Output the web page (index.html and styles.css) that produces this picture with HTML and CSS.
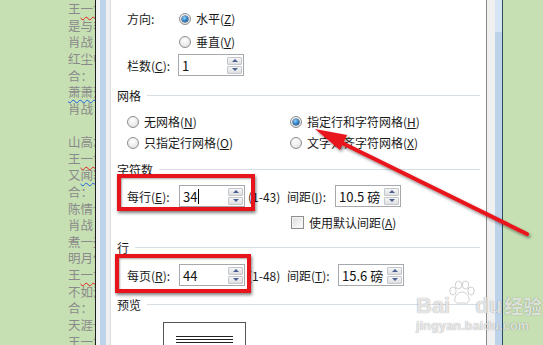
FILE: index.html
```html
<!DOCTYPE html>
<html lang="zh-CN">
<head>
<meta charset="utf-8">
<title>文档网格</title>
<link rel="stylesheet" href="styles.css">
</head>
<body>
<div class="screen">
  <div class="doc-left">
    <div class="ln">王<span class="wv-red">一博</span></div>
    <div class="ln">是与非</div>
    <div class="ln">肖战</div>
    <div class="ln">红尘中</div>
    <div class="ln">合：</div>
    <div class="ln"><span class="wv-blue">萧萧落</span></div>
    <div class="ln">肖战</div>
    <div class="ln">&nbsp;</div>
    <div class="ln">山高水</div>
    <div class="ln">王<span class="wv-red">一博</span></div>
    <div class="ln">又<span class="wv-blue">闻寒</span></div>
    <div class="ln">合：</div>
    <div class="ln">陈情令</div>
    <div class="ln">肖战</div>
    <div class="ln">煮一壶</div>
    <div class="ln">明月何</div>
    <div class="ln">王<span class="wv-red">一博</span></div>
    <div class="ln">不如流</div>
    <div class="ln">合：</div>
    <div class="ln">天涯一</div>
    <div class="ln">王一博</div>
  </div>
  <div class="frame-left">
    <span class="fl-dark"></span><span class="fl-light"></span><span class="fl-blue"></span><span class="fl-gray"></span>
  </div>

  <div class="dialog">
    <div class="row r-dir">
      <span class="label w52">方向:</span>
      <span class="radio on"></span><span class="opt">水平(<u>Z</u>)</span>
    </div>
    <div class="row r-dir indent">
      <span class="radio"></span><span class="opt">垂直(<u>V</u>)</span>
    </div>
    <div class="row r-spin">
      <span class="label w51">栏数(<u>C</u>):</span>
      <span class="spin"><span class="val">1</span><span class="btns"><span class="up"></span><span class="dn"></span></span></span>
    </div>

    <div class="hdr h-grid"><span>网格</span><i></i></div>
    <div class="radios">
      <div class="cell"><span class="radio"></span><span class="opt">无网格(<u>N</u>)</span></div>
      <div class="cell"><span class="radio on"></span><span class="opt">指定行和字符网格(<u>H</u>)</span></div>
      <div class="cell"><span class="radio"></span><span class="opt">只指定行网格(<u>O</u>)</span></div>
      <div class="cell"><span class="radio"></span><span class="opt">文字对齐字符网格(<u>X</u>)</span></div>
    </div>

    <div class="hdr h-chars"><span>字符数</span><i></i></div>
    <div class="row r-num">
      <span class="label w52">每行(<u>E</u>):</span>
      <span class="spin"><span class="val">34<b class="caret"></b></span><span class="btns"><span class="up"></span><span class="dn"></span></span></span>
      <span class="range">(1-43)</span>
      <span class="label w48">间距(<u>I</u>):</span>
      <span class="spin"><span class="val">10.5 磅</span><span class="btns"><span class="up"></span><span class="dn"></span></span></span>
    </div>
    <div class="row r-check">
      <span class="check"></span><span class="opt">使用默认间距(<u>A</u>)</span>
    </div>

    <div class="hdr h-lines"><span>行</span><i></i></div>
    <div class="row r-num r-page">
      <span class="label w52">每页(<u>R</u>):</span>
      <span class="spin"><span class="val">44</span><span class="btns"><span class="up"></span><span class="dn"></span></span></span>
      <span class="range">(1-48)</span>
      <span class="label w51">间距(<u>T</u>):</span>
      <span class="spin"><span class="val">15.6 磅</span><span class="btns"><span class="up"></span><span class="dn"></span></span></span>
    </div>

    <div class="hdr h-prev"><span>预览</span><i></i></div>
    <div class="preview">
      <div class="page"><i></i><i></i><i></i></div>
    </div>
  </div>

  <div class="frame-right">
    <span class="fr-gray"></span><span class="fr-blue"><span class="fr-top"></span></span><span class="fr-dark"></span>
  </div>
  <div class="doc-right"></div>

  <div class="mark mark-a"></div>
  <div class="mark mark-b"></div>

  <svg class="arrow" width="543" height="345" viewBox="0 0 543 345">
    <defs>
      <filter id="sh" x="-20%" y="-20%" width="140%" height="140%">
        <feDropShadow dx="1.5" dy="2" stdDeviation="1.5" flood-color="#000" flood-opacity="0.45"/>
      </filter>
    </defs>
    <g filter="url(#sh)">
      <line x1="527" y1="234" x2="338" y2="141" stroke="#e8141b" stroke-width="4" stroke-linecap="round"/>
      <polygon points="315,129 347,135 340,150" fill="#e8141b"/>
    </g>
  </svg>

  <div class="watermark">
    <div class="wm-top"><span>Bai</span><svg class="paw" width="30" height="26" viewBox="0 0 30 26"><ellipse cx="6" cy="11" rx="3.2" ry="4" /><ellipse cx="11.5" cy="5" rx="3.2" ry="4"/><ellipse cx="18.5" cy="5" rx="3.2" ry="4"/><ellipse cx="24" cy="11" rx="3.2" ry="4"/><path d="M15 12 C10 12 7 18 8 21 C9 24 12 23 15 23 C18 23 21 24 22 21 C23 18 20 12 15 12 Z"/></svg><span>du</span><span class="wm-cn">经验</span></div>
    <div class="wm-url">jingyan.baidu.com</div>
  </div>
</div>
</body>
</html>
```

FILE: styles.css
```css
html, body {
  margin: 0;
  padding: 0;
  background: #fff;
}
.screen {
  position: relative;
  width: 543px;
  height: 345px;
  overflow: hidden;
  display: flex;
  font-family: "Noto Sans CJK SC", "Noto Sans", sans-serif;
  font-size: 12px;
  color: #1a1a1a;
}

/* ---------- left document area ---------- */
.doc-left {
  width: 95px;
  flex: none;
  background: #c6e0b4;
  box-sizing: border-box;
  padding: 1px 0 0 68px;
  overflow: hidden;
  white-space: nowrap;
  color: #8a8a8a;
  font-size: 12.5px;
}
.ln {
  height: 16.625px;
  line-height: 16.625px;
}
.wv-red {
  text-decoration: underline wavy #e02020;
  text-decoration-thickness: 1px;
  text-underline-offset: 2px;
}
.wv-blue {
  text-decoration: underline wavy #2060e0;
  text-decoration-thickness: 1px;
  text-underline-offset: 2px;
}

.frame-left {
  display: flex;
  flex: none;
}
.fl-dark { width: 1px; background: #1e1e1e; }
.fl-light { width: 4px; background: #f3f3f3; }
.fl-blue { width: 6px; background: #bcd3ea; }
.fl-gray { width: 4px; background: #efefef; border-right: 1px solid #dcdcdc; }

/* ---------- dialog ---------- */
.dialog {
  width: 376px;
  flex: none;
  box-sizing: border-box;
  background: #fff;
  border-right: 1px solid #8a8a8a;
  padding: 7px 6px 0 6px;
  display: flex;
  flex-direction: column;
}
.dialog > * {
  flex-shrink: 0;
}
.row {
  display: flex;
  align-items: center;
  padding-left: 10px;
  white-space: nowrap;
}
.r-dir { height: 23px; }
.indent { padding-left: 62px; }
.r-spin { height: 24px; }
.label { flex: none; }
.w52 { width: 52px; }
.w51 { width: 51px; }
.w48 { width: 48px; }
.opt { margin-left: 5px; }
u { text-decoration: underline; text-underline-offset: 1px; }

.radio {
  flex: none;
  width: 12px;
  height: 12px;
  box-sizing: border-box;
  border-radius: 50%;
  border: 1px solid #8c8e90;
  background: radial-gradient(circle at 45% 35%, #ffffff 0, #ececec 55%, #cfd0d1 100%);
  position: relative;
}
.radio.on::after {
  content: "";
  position: absolute;
  left: 2px;
  top: 2px;
  width: 6px;
  height: 6px;
  border-radius: 50%;
  background: radial-gradient(circle at 40% 35%, #9ad8ff 0, #2a7fc6 50%, #0f3f78 100%);
  box-shadow: 0 0 0 0.6px #193f6b;
}

.check {
  flex: none;
  width: 13px;
  height: 13px;
  box-sizing: border-box;
  border: 1px solid #8c8e90;
  background: linear-gradient(135deg, #dcdcdc, #fdfdfd);
  box-shadow: inset 0 0 0 1px #f4f4f4;
}

.spin {
  flex: none;
  width: 66px;
  height: 22px;
  box-sizing: border-box;
  border: 1px solid #a5a9ad;
  background: #fff;
  display: flex;
  align-items: center;
  padding: 0 1px 0 3px;
  color: #111;
  font-size: 13px;
}
.val {
  flex: 1;
  display: flex;
  align-items: center;
  white-space: nowrap;
}
.caret {
  display: inline-block;
  width: 1px;
  height: 15px;
  background: #000;
  margin-left: 1px;
}
.btns {
  display: flex;
  flex-direction: column;
  gap: 1px;
}
.btns span {
  width: 15px;
  height: 8px;
  box-sizing: border-box;
  border: 1px solid #c3c7cc;
  background: linear-gradient(#f6f6f6, #dedfe0);
  border-radius: 1px;
  display: flex;
  align-items: center;
  justify-content: center;
}
.btns .up::before {
  content: "";
  border-left: 3.5px solid transparent;
  border-right: 3.5px solid transparent;
  border-bottom: 3.5px solid #4b5f93;
}
.btns .dn::before {
  content: "";
  border-left: 3.5px solid transparent;
  border-right: 3.5px solid transparent;
  border-top: 3.5px solid #4b5f93;
}

.hdr {
  height: 14px;
  display: flex;
  align-items: center;
  gap: 6px;
  white-space: nowrap;
  color: #1a1a1a;
}
.hdr i {
  flex: 1;
  height: 1px;
  background: #d6dee4;
}
.h-grid { margin-top: 11px; }
.h-chars { margin-top: 9px; }
.h-lines { margin-top: 8px; }
.h-prev { margin-top: 10px; }

.radios {
  margin-top: 9px;
  padding-left: 10px;
  display: grid;
  grid-template-columns: 163px auto;
  grid-auto-rows: 21px;
}
.cell {
  display: flex;
  align-items: center;
  white-space: nowrap;
}

.r-num {
  height: 24px;
  margin-top: 8px;
}
.r-page { margin-top: 9px; }
.range {
  width: 42px;
  flex: none;
  padding-left: 3px;
  box-sizing: border-box;
}
.r-check {
  height: 20px;
  margin-top: 4px;
  padding-left: 174px;
}

.preview {
  margin-top: 11px;
  padding-left: 46px;
}
.page {
  width: 83px;
  height: 60px;
  box-sizing: border-box;
  border: 1px solid #555;
  padding: 13px 0 0 12px;
  display: flex;
  flex-direction: column;
  gap: 2px;
}
.page i {
  width: 57px;
  height: 1px;
  background: #222;
}

/* ---------- right frame ---------- */
.frame-right {
  display: flex;
  flex: none;
}
.fr-gray { width: 8px; background: #f0f0f0; }
.fr-blue { width: 7px; background: #bcd3ea; display: flex; flex-direction: column; }
.fr-top { height: 32px; background: #d6e5f3; }
.fr-dark { width: 1px; background: #2e4d60; }
.doc-right {
  flex: 1;
  background: #c6e0b4;
}

/* ---------- annotations ---------- */
.mark {
  position: absolute;
  box-sizing: border-box;
  border: 4px solid #e8141b;
  box-shadow: 1px 2px 3px rgba(0, 0, 0, 0.5), inset 1px 1px 2px rgba(0, 0, 0, 0.35);
}
.mark-a { left: 117px; top: 174px; width: 138px; height: 37px; }
.mark-b { left: 115px; top: 254px; width: 136px; height: 39px; }

.arrow {
  position: absolute;
  left: 0;
  top: 0;
  pointer-events: none;
}

.watermark {
  position: absolute;
  left: 416px;
  top: 284px;
  color: rgba(255, 255, 255, 0.75);
  text-shadow: 0 0 1px rgba(0, 0, 0, 0.28), 0 0 1px rgba(0, 0, 0, 0.2);
  font-family: "Liberation Sans", "Noto Sans CJK SC", sans-serif;
  pointer-events: none;
}
.wm-top {
  display: flex;
  align-items: flex-end;
  font-size: 22px;
  font-weight: bold;
  line-height: 24px;
  height: 34px;
}
.paw {
  margin: 0 -2px 12px -3px;
  fill: rgba(255, 255, 255, 0.6);
  stroke: rgba(0, 0, 0, 0.18);
  stroke-width: 1;
}
.wm-cn {
  font-family: "Noto Sans CJK SC", sans-serif;
  font-size: 19px;
  margin-left: 2px;
}
.wm-url {
  font-size: 12.5px;
  font-weight: bold;
  letter-spacing: 0.2px;
  margin-top: 1px;
}
```
